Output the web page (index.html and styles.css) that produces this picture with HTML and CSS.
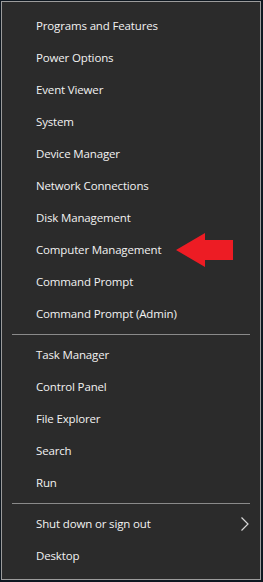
FILE: index.html
```html
<!DOCTYPE html>
<html>
<head>
<meta charset="utf-8">
<link rel="stylesheet" href="styles.css">
</head>
<body>
<div class="menu">
  <div class="item">Programs and Features</div>
  <div class="item">Power Options</div>
  <div class="item">Event Viewer</div>
  <div class="item">System</div>
  <div class="item">Device Manager</div>
  <div class="item">Network Connections</div>
  <div class="item">Disk Management</div>
  <div class="item">Computer Management</div>
  <div class="item">Command Prompt</div>
  <div class="item">Command Prompt (Admin)</div>
  <div class="sep"></div>
  <div class="item">Task Manager</div>
  <div class="item">Control Panel</div>
  <div class="item">File Explorer</div>
  <div class="item">Search</div>
  <div class="item">Run</div>
  <div class="sep"></div>
  <div class="item sub">Shut down or sign out
    <svg class="chev" width="10" height="16" viewBox="0 0 10 16"><path d="M1.5 1.5 L8 8 L1.5 14.5" fill="none" stroke="#d8d8d8" stroke-width="1.2"/></svg>
  </div>
  <div class="item">Desktop</div>
  <svg class="arrow" width="60" height="36" viewBox="0 0 60 36"><polygon points="0,17 29,0 29,7 57,7 57,27 29,27 29,34" fill="#ed1c24"/></svg>
</div>
</body>
</html>
```
FILE: styles.css
```css
html, body {
  margin: 0;
  padding: 0;
  background: #0e1720;
  width: 263px;
  height: 582px;
  overflow: hidden;
}
.menu {
  position: relative;
  margin: 1px 0 0 1px;
  width: 258px;
  border: 1px solid #9c9c9c;
  background: #2b2b2b;
  padding-top: 8px;
  height: 569px;
  box-sizing: content-box;
  font-family: "Open Sans", "Noto Sans", sans-serif;
  font-size: 11.5px;
  letter-spacing: -0.15px;
  color: #f2f2f2;
}
.item {
  height: 32px;
  line-height: 32px;
  padding-left: 34px;
  white-space: nowrap;
}
.sub {
  display: flex;
  align-items: center;
  justify-content: space-between;
  padding-right: 10px;
}
.chev {
  display: block;
}
.sep {
  box-sizing: border-box;
  height: 9px;
  padding-top: 4px;
  margin: 0 10px;
}
.sep::before {
  content: "";
  display: block;
  height: 1px;
  background: #8a8a8a;
  width: 238px;
}
.arrow {
  position: absolute;
  left: 174px;
  top: 231px;
}
```
